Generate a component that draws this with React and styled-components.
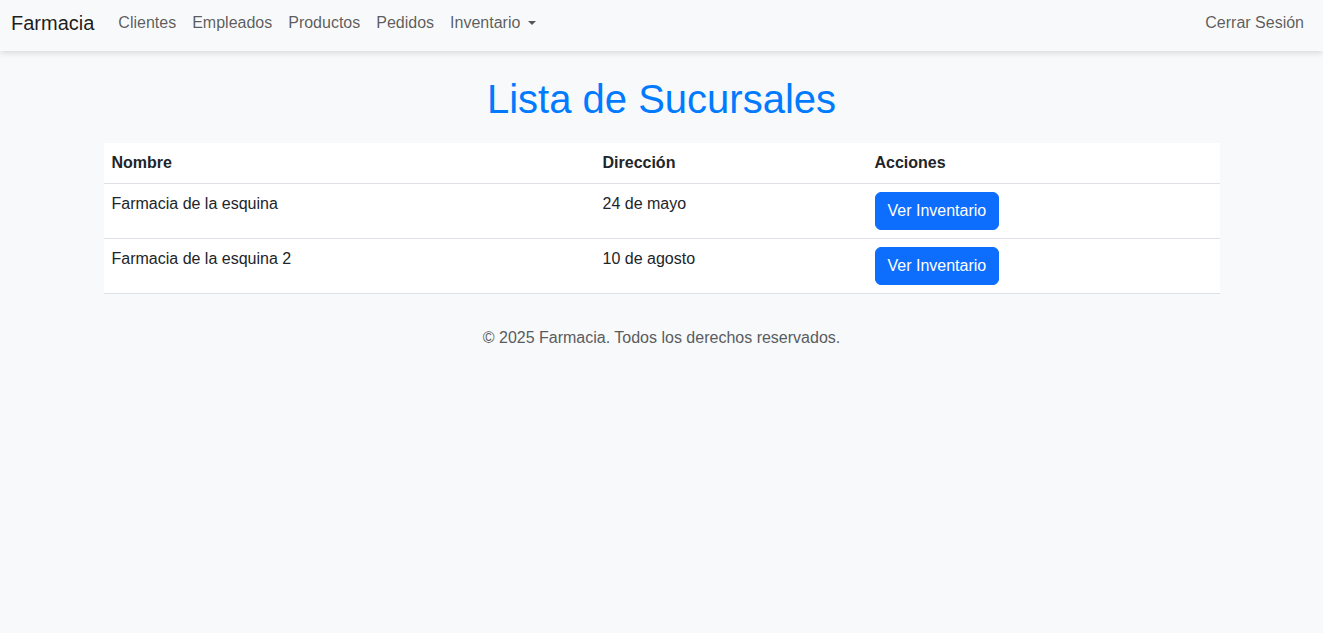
import styled, { createGlobalStyle } from 'styled-components'

const GlobalStyle = createGlobalStyle`
    * { box-sizing: border-box; }
    body {
        margin: 0;
        background: #f8f9fa;
        font-family: "Liberation Sans", Arial, sans-serif;
        font-size: 16px;
        line-height: 1.5;
        color: #212529;
    }
`;

const Navbar = styled.nav`
    display: flex;
    align-items: center;
    justify-content: space-between;
    height: 51px;
    padding: 1px 11px 6px 11px;
    background: #f8f9fa;
    box-shadow: 0 2px 6px rgba(0, 0, 0, 0.13);
    position: relative;
`;

const NavLeft = styled.div`
    display: flex;
    align-items: center;
`;

const Brand = styled.a`
    font-size: 20px;
    line-height: 30px;
    color: rgba(0, 0, 0, 0.9);
    text-decoration: none;
    margin-right: 16px;
`;

const NavLink = styled.a`
    font-size: 16px;
    line-height: 24px;
    color: rgba(0, 0, 0, 0.65);
    text-decoration: none;
    padding: 0 8px;

    &.dropdown::after {
        content: "";
        display: inline-block;
        margin-left: 8px;
        vertical-align: 3px;
        border-top: 4.8px solid;
        border-right: 4.8px solid transparent;
        border-left: 4.8px solid transparent;
        border-bottom: 0;
    }
`;

const Container = styled.main`
    max-width: 1140px;
    margin: 0 auto;
    padding: 0 12px;
`;

const Title = styled.h1`
    margin: 24px 0 20px;
    font-size: 40px;
    font-weight: 400;
    line-height: 48px;
    text-align: center;
    color: #007bff;
`;

const Table = styled.table`
    width: 100%;
    border-collapse: collapse;
    background: #fff;
    table-layout: fixed;
`;

const Th = styled.th`
    text-align: left;
    font-weight: 700;
    padding: 8px;
    border-bottom: 1px solid #dee2e6;
    width: ${p => p.$w};
`;

const Td = styled.td`
    padding: 8px;
    vertical-align: top;
    border-bottom: 1px solid #dee2e6;
`;

const Button = styled.button`
    font-family: inherit;
    font-size: 16px;
    line-height: 24px;
    padding: 6px 12px;
    color: #fff;
    background: #0d6efd;
    border: 1px solid #0d6efd;
    border-radius: 6px;
    cursor: pointer;
`;

const Footer = styled.footer`
    text-align: center;
    color: #595c5f;
    margin-top: 32px;
`;

const sucursales = [
    { id: 1, nombre: 'Farmacia de la esquina', direccion: '24 de mayo' },
    { id: 2, nombre: 'Farmacia de la esquina 2', direccion: '10 de agosto' },
];

function App() {
    return (
        <>
            <GlobalStyle />
            <Navbar>
                <NavLeft>
                    <Brand href="#">Farmacia</Brand>
                    <NavLink href="#">Clientes</NavLink>
                    <NavLink href="#">Empleados</NavLink>
                    <NavLink href="#">Productos</NavLink>
                    <NavLink href="#">Pedidos</NavLink>
                    <NavLink href="#" className="dropdown">Inventario</NavLink>
                </NavLeft>
                <NavLink href="#">Cerrar Sesión</NavLink>
            </Navbar>
            <Container>
                <Title>Lista de Sucursales</Title>
                <Table>
                    <thead>
                        <tr>
                            <Th $w="491px">Nombre</Th>
                            <Th $w="272px">Dirección</Th>
                            <Th $w="auto">Acciones</Th>
                        </tr>
                    </thead>
                    <tbody>
                        {sucursales.map(s => (
                            <tr key={s.id}>
                                <Td>{s.nombre}</Td>
                                <Td>{s.direccion}</Td>
                                <Td><Button>Ver Inventario</Button></Td>
                            </tr>
                        ))}
                    </tbody>
                </Table>
                <Footer>© 2025 Farmacia. Todos los derechos reservados.</Footer>
            </Container>
        </>
    )
}

export default App
